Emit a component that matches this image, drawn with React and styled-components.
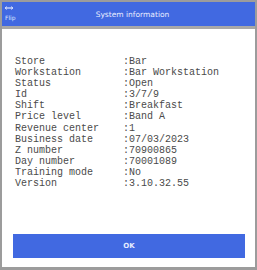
import styled, { createGlobalStyle } from "styled-components";

const Global = createGlobalStyle`
  html, body {
    margin: 0;
    padding: 0;
    background: #ffffff;
  }
  #root {
    width: 257px;
    height: 270px;
  }
`;

const rows = [
    ["Store", "Bar"],
    ["Workstation", "Bar Workstation"],
    ["Status", "Open"],
    ["Id", "3/7/9"],
    ["Shift", "Breakfast"],
    ["Price level", "Band A"],
    ["Revenue center", "1"],
    ["Business date", "07/03/2023"],
    ["Z number", "70900865"],
    ["Day number", "70001089"],
    ["Training mode", "No"],
    ["Version", "3.10.32.55"],
];

export default function App() {
    return (
        <>
            <Global />
            <Frame>
                <Header>
                    <FlipButton>
                        <svg width="8" height="4" viewBox="0 0 8 4">
                            <path d="M0 2 L8 2" stroke="#dfe6ff" strokeWidth="1.2" />
                            <path d="M0 2 L2 0.5 M0 2 L2 3.5 M8 2 L6 0.5 M8 2 L6 3.5" stroke="#dfe6ff" strokeWidth="0.8" />
                        </svg>
                        <span>Flip</span>
                    </FlipButton>
                    <Title>System information</Title>
                </Header>
                <Divider />
                <Body>
                    <InfoList>
                        {rows.map(([label, value]) => (
                            <Row key={label}>
                                <Label>{label}</Label>
                                <Value>:{value}</Value>
                            </Row>
                        ))}
                    </InfoList>
                    <OkButton>OK</OkButton>
                </Body>
            </Frame>
        </>
    );
}

const Frame = styled.div`
    box-sizing: border-box;
    width: 257px;
    height: 270px;
    border: 2px solid #9c9c9c;
    border-bottom-width: 3px;
    display: flex;
    flex-direction: column;
    background: #ffffff;
`;

const Header = styled.div`
    position: relative;
    height: 24px;
    background-color: #4169e1;
    display: flex;
    align-items: center;
    justify-content: center;
    font-family: "DejaVu Sans", sans-serif;
    color: #ffffff;
`;

const FlipButton = styled.div`
    position: absolute;
    left: 3px;
    top: 4px;
    display: flex;
    flex-direction: column;
    align-items: flex-start;
    gap: 4px;
    font-size: 6px;
    color: #dfe6ff;

    span {
        line-height: 7px;
    }
`;

const Title = styled.div`
    font-size: 7.5px;
    color: #e8edff;
    margin-left: 8px;
`;

const Divider = styled.div`
    height: 3px;
    background-color: #a8a8a8;
`;

const Body = styled.div`
    flex: 1;
    display: flex;
    flex-direction: column;
    padding: 27px 10px 9px 11px;
`;

const InfoList = styled.div`
    flex: 1;
    display: flex;
    flex-direction: column;
    padding-left: 2px;
    font-family: "Liberation Mono", "Courier New", monospace;
    font-size: 10px;
    line-height: 11.1px;
    color: #4a4a4a;
`;

const Row = styled.div`
    display: flex;
`;

const Label = styled.span`
    width: 108px;
    white-space: pre;
`;

const Value = styled.span`
    white-space: pre;
`;

const OkButton = styled.button`
    height: 24px;
    width: 100%;
    border: 0;
    background-color: #4169e1;
    color: #e6ecff;
    font-family: "DejaVu Sans", sans-serif;
    font-size: 7px;
    font-weight: bold;
    padding: 0;
`;
